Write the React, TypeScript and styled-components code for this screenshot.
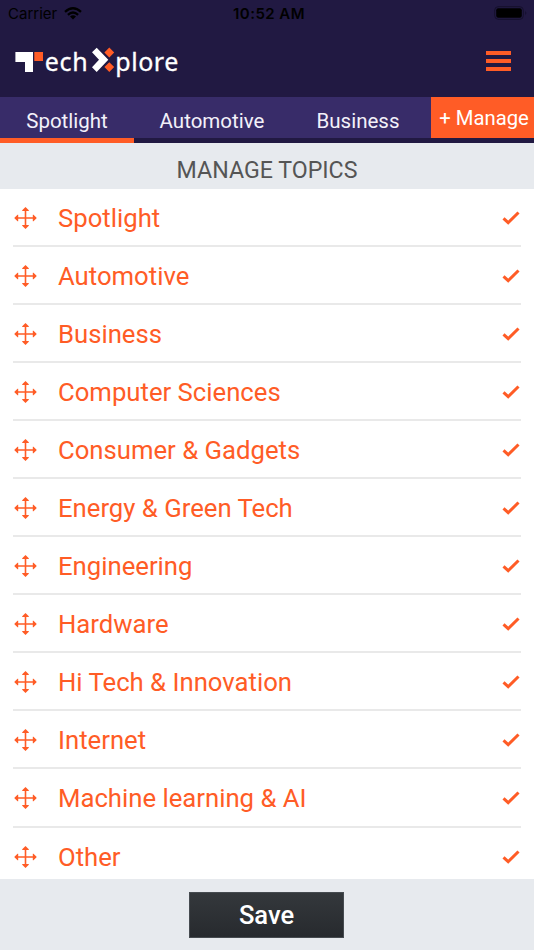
import { useState } from 'react';
import styled, { createGlobalStyle } from 'styled-components';

const TABS = [
  { label: 'Spotlight', width: 134 },
  { label: 'Automotive', width: 156 },
  { label: 'Business', width: 136 },
];

const TOPICS = [
  'Spotlight',
  'Automotive',
  'Business',
  'Computer Sciences',
  'Consumer & Gadgets',
  'Energy & Green Tech',
  'Engineering',
  'Hardware',
  'Hi Tech & Innovation',
  'Internet',
  'Machine learning & AI',
  'Other',
];

const Logo = () => (
  <svg width="170" height="36" viewBox="0 0 170 36">
    <path d="M.4 8h17.600v20H10V18H.4z" fill="#fff" />
    <path d="M19.300 8h8.700v9h-8.700z" fill="#ff5c26" />
    <LogoText x="29.700" y="27" textLength="43">ech</LogoText>
    <path d="M81.700 3.700L93.300 15.800L81.700 28L77 23.300L84 15.800L77 8.200z" fill="#fff" />
    <path d="M94.300 3.600l4.900 4.900-4.900 4.900-4.900-4.900zM94.300 18.200l4.900 4.900-4.900 4.900-4.900-4.900z" fill="#ff5c26" />
    <LogoText x="100.300" y="27" textLength="63">plore</LogoText>
  </svg>
);

const WifiIcon = () => (
  <svg width="18" height="13" viewBox="0 0 18 13" fill="none" stroke="#000" strokeWidth="2.300">
    <path d="M1 4.800Q9-2.200 17 4.800M3.900 7.800Q9 3.200 14.100 7.800" />
    <path d="M9 12.500L6 9.500Q9 7 12 9.500z" fill="#000" stroke="none" />
  </svg>
);

const BatteryIcon = () => (
  <svg width="34" height="14" viewBox="0 0 34 14">
    <rect x="0.700" y="0.700" width="28.600" height="12.600" rx="3.500" fill="none" stroke="#15102c" strokeWidth="1" />
    <rect x="2.200" y="2.200" width="25.600" height="9.600" rx="2" fill="#000" />
    <path d="M31.500 4.800q1.600 2.200 0 4.400z" fill="#0f0b23" />
  </svg>
);

const MoveIcon = () => (
  <svg width="24" height="24" viewBox="0 0 24 24" fill="#ff5c26">
    <path d="M11.700 3h1.600v18h-1.600zM3.500 11.200h18v1.600H3.500z" />
    <path d="M12.500 1l3.300 3.300v.7H9.200v-.7zM12.500 23l3.300-3.300V19H9.200v.7zM1.200 12l3.300-3.300h.7v6.600h-.7zM23.800 12l-3.300-3.300h-.7v6.600h.7z" />
  </svg>
);

const CheckIcon = () => (
  <svg width="18" height="14" viewBox="0 0 18 14" fill="none" stroke="#ff5c26" strokeWidth="3">
    <path d="M1.500 7.300L6.200 11.700L16.500 1.500" />
  </svg>
);

const App = () => {
  const [active, setActive] = useState('Spotlight');

  return (
    <Screen>
      <GlobalStyle />
      <StatusBar>
        <Carrier>Carrier <WifiIcon /></Carrier>
        <Time>10:52 AM</Time>
        <Battery><BatteryIcon /></Battery>
      </StatusBar>
      <Header>
        <Logo />
        <MenuButton aria-label="Menu">
          <MenuBar />
          <MenuBar />
          <MenuBar />
        </MenuButton>
      </Header>
      <TabBar>
        {TABS.map((tab) => (
          <Tab
            key={tab.label}
            $width={tab.width}
            $active={active === tab.label}
            onClick={() => setActive(tab.label)}
          >
            {tab.label}
          </Tab>
        ))}
        <ManageButton>+ Manage</ManageButton>
      </TabBar>
      <Title>MANAGE TOPICS</Title>
      <TopicList>
        {TOPICS.map((topic) => (
          <TopicRow key={topic}>
            <MoveIcon />
            <TopicName>{topic}</TopicName>
            <CheckIcon />
          </TopicRow>
        ))}
      </TopicList>
      <Footer>
        <SaveButton>Save</SaveButton>
      </Footer>
    </Screen>
  );
};

export default App;

const GlobalStyle = createGlobalStyle`
  * {
    box-sizing: border-box;
  }

  body {
    margin: 0;
    font-family: Roboto, sans-serif;
  }

  button {
    border: 0;
    padding: 0;
    font-family: inherit;
  }

  svg {
    display: block;
    flex-shrink: 0;
  }
`;

const Screen = styled.div`
  width: 534px;
  height: 950px;
  display: flex;
  flex-direction: column;
  overflow: hidden;
  background: #fff;
`;

const StatusBar = styled.div`
  height: 28px;
  flex-shrink: 0;
  display: grid;
  grid-template-columns: 1fr auto 1fr;
  align-items: center;
  padding: 0 6px 0 8px;
  background: #211942;
  color: #000;
  font-family: Inter, sans-serif;
  font-size: 15px;
`;

const Carrier = styled.div`
  display: flex;
  align-items: center;
  gap: 7px;
  padding-bottom: 1px;
`;

const Time = styled.div`
  padding: 0 0 1px 2px;
  font-weight: 600;
  letter-spacing: 0.45px;
`;

const Battery = styled.div`
  display: flex;
  justify-content: flex-end;
  padding-bottom: 2px;
`;

const Header = styled.header`
  height: 69px;
  flex-shrink: 0;
  display: flex;
  align-items: flex-start;
  justify-content: space-between;
  padding: 16px 23px 0 15px;
  background: #211942;
`;

const LogoText = styled.text`
  fill: #fff;
  stroke: #fff;
  stroke-width: 0.3px;
  font-family: 'Noto Sans', sans-serif;
  font-size: 25px;
`;

const MenuButton = styled.button`
  display: flex;
  flex-direction: column;
  gap: 4px;
  margin-top: 7px;
  background: none;
`;

const MenuBar = styled.span`
  width: 25px;
  height: 4px;
  background: #ff5c26;
`;

const TabBar = styled.nav`
  height: 46px;
  flex-shrink: 0;
  display: flex;
  background: linear-gradient(#382c69 41px, #211942 41px);
`;

const Tab = styled.button<{ $width: number; $active: boolean }>`
  width: ${({ $width }) => $width}px;
  border-bottom: 5px solid ${({ $active }) => ($active ? '#ff5c26' : 'transparent')};
  padding-top: 6px;
  background: none;
  color: #f3f1fa;
  font-size: 20.5px;
`;

const ManageButton = styled.button`
  height: 41px;
  margin-left: auto;
  width: 103px;
  padding-left: 3px;
  background: #ff5c26;
  color: #fff;
  font-size: 20.3px;
  white-space: nowrap;
`;

const Title = styled.h1`
  height: 46px;
  flex-shrink: 0;
  margin: 0;
  padding-top: 4px;
  background: #e7eaee;
  color: #555;
  font-size: 23.2px;
  font-weight: 400;
  line-height: 47px;
  text-align: center;
`;

const TopicList = styled.div`
  flex: 1;
  min-height: 0;
  overflow: hidden;
  padding: 0 13px;
`;

const TopicRow = styled.div`
  height: 58.05px;
  display: flex;
  align-items: center;
  padding: 2px 1px 0 0;
  border-bottom: 2px solid #e9e9e9;
  color: #ff5c26;
`;

const TopicName = styled.span`
  flex: 1;
  margin-left: 21px;
  font-size: 25.7px;
`;

const Footer = styled.footer`
  height: 71px;
  flex-shrink: 0;
  display: flex;
  justify-content: center;
  align-items: center;
  padding-right: 1px;
  background: #e7eaee;
`;

const SaveButton = styled.button`
  width: 155px;
  height: 46px;
  border: 1px solid #464b50;
  background: linear-gradient(#34383c, #272a2e);
  color: #fff;
  font-size: 25.5px;
  font-weight: 500;
`;
